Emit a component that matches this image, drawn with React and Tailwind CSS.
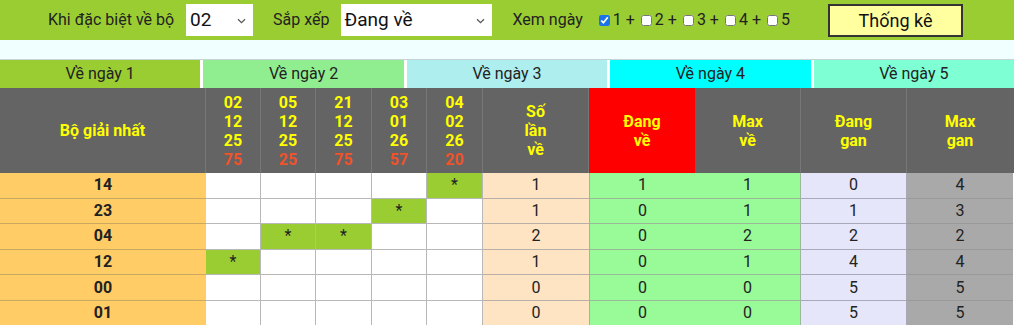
import React from 'react';

const dates = [
  ['02', '12', '25', '75'],
  ['05', '12', '25', '25'],
  ['21', '12', '25', '75'],
  ['03', '01', '26', '57'],
  ['04', '02', '26', '20'],
];

const rows = [
  { bo: '14', hit: [4], so: 1, dv: 1, mv: 1, dg: 0, mg: 4 },
  { bo: '23', hit: [3], so: 1, dv: 0, mv: 1, dg: 1, mg: 3 },
  { bo: '04', hit: [1, 2], so: 2, dv: 0, mv: 2, dg: 2, mg: 2 },
  { bo: '12', hit: [0], so: 1, dv: 0, mv: 1, dg: 4, mg: 4 },
  { bo: '00', hit: [], so: 0, dv: 0, mv: 0, dg: 5, mg: 5 },
  { bo: '01', hit: [], so: 0, dv: 0, mv: 0, dg: 5, mg: 5 },
];

const tabs = [
  { label: 'Về ngày 1', bg: 'bg-[#9acd32]' },
  { label: 'Về ngày 2', bg: 'bg-[#90ee90]' },
  { label: 'Về ngày 3', bg: 'bg-[#afeeee]' },
  { label: 'Về ngày 4', bg: 'bg-[#00ffff]' },
  { label: 'Về ngày 5', bg: 'bg-[#7fffd4]' },
];

const cols = 'grid grid-cols-[206px_55px_55px_56px_55px_56px_106px_106px_106px_106px_106px]';

function Chevron() {
  return (
    <svg width="9" height="6" viewBox="0 0 9 6" className="absolute right-[7px] top-[14px] pointer-events-none">
      <path d="M1 1.2 L4.5 4.6 L8 1.2" fill="none" stroke="#555" strokeWidth="1.2" />
    </svg>
  );
}

function Select({ value, width }) {
  return (
    <div className={`relative h-8 bg-white ${width}`}>
      <div className="pl-[4px] text-[19px] leading-8 text-[#111]">{value}</div>
      <Chevron />
    </div>
  );
}

function Check({ checked, label }) {
  return (
    <label className="flex items-center">
      <input
        type="checkbox"
        defaultChecked={checked}
        className="m-0 w-[11px] h-[11px] accent-[#1a73e8]"
      />
      <span className="ml-[3px] mr-[6px]">{label}</span>
    </label>
  );
}

export default function App() {
  return (
    <div className="w-[1014px] bg-white text-[#222]" style={{ fontFamily: 'Roboto, "Liberation Sans", sans-serif' }}>
      <div className="h-10 bg-[#9acd32] flex items-center pl-[48px] text-[16px]">
        <span>Khi đặc biệt về bộ</span>
        <div className="ml-[12px]"><Select value="02" width="w-[67px]" /></div>
        <span className="ml-[20px]">Sắp xếp</span>
        <div className="ml-[11px]"><Select value="Đang về" width="w-[151px]" /></div>
        <span className="ml-[21px]">Xem ngày</span>
        <div className="ml-[16px] flex items-center">
          <Check checked label="1 +" />
          <Check label="2 +" />
          <Check label="3 +" />
          <Check label="4 +" />
          <Check label="5" />
        </div>
        <button className="ml-auto mr-[51px] w-[135px] h-[33px] bg-[#ffffa0] border-2 border-[#333] text-[18px] text-[#111]">
          Thống kê
        </button>
      </div>

      <div className="h-[19px] bg-[#f0ffff]" />

      <div className="grid grid-cols-5 gap-[3px] border-t border-[#c8d4d4] bg-white h-[29px]">
        {tabs.map((t) => (
          <div key={t.label} className={`${t.bg} flex items-center justify-center text-[16px] text-[#222]`}>
            {t.label}
          </div>
        ))}
      </div>

      <div className={`${cols} h-[85px] bg-[#646464] text-[#ffff00] font-bold text-[16px] leading-[19px]`}>
        <div className="flex items-center justify-center border-r border-[#777]">Bộ giải nhất</div>
        {dates.map((d, i) => (
          <div key={i} className="flex flex-col items-center justify-center border-r border-[#777]">
            <span>{d[0]}</span>
            <span>{d[1]}</span>
            <span>{d[2]}</span>
            <span className="text-[#f0522a]">{d[3]}</span>
          </div>
        ))}
        <div className="flex flex-col items-center justify-center border-r border-[#777]">
          <span>Số</span>
          <span>lần</span>
          <span>về</span>
        </div>
        <div className="flex flex-col items-center justify-center bg-[#ff0000]">
          <span>Đang</span>
          <span>về</span>
        </div>
        <div className="flex flex-col items-center justify-center border-r border-[#777]">
          <span>Max</span>
          <span>về</span>
        </div>
        <div className="flex flex-col items-center justify-center border-r border-[#777]">
          <span>Đang</span>
          <span>gan</span>
        </div>
        <div className="flex flex-col items-center justify-center">
          <span>Max</span>
          <span>gan</span>
        </div>
      </div>

      {rows.map((r) => (
        <div key={r.bo} className={`${cols} h-[25.6px] text-[16px] text-[#222]`}>
          <div className="flex items-center justify-center bg-[#ffcc66] font-bold border-b border-[#c9a860]">{r.bo}</div>
          {[0, 1, 2, 3, 4].map((c) => (
            <div
              key={c}
              className={`flex items-center justify-center border-r border-b border-[#b8b8b8] ${r.hit.includes(c) ? 'bg-[#9acd32]' : 'bg-white'}`}
            >
              {r.hit.includes(c) ? '*' : ''}
            </div>
          ))}
          <div className="flex items-center justify-center bg-[#ffe4c4] border-b border-[#b8b0a8]">{r.so}</div>
          <div className="flex items-center justify-center bg-[#98fb98] border-l border-b border-[#9ab89a]">{r.dv}</div>
          <div className="flex items-center justify-center bg-[#98fb98] border-r border-b border-[#9ab89a]">{r.mv}</div>
          <div className="flex items-center justify-center bg-[#e6e6fa] border-r border-b border-[#a8a8b8]">{r.dg}</div>
          <div className="flex items-center justify-center bg-[#a9a9a9] border-b border-[#999]">{r.mg}</div>
        </div>
      ))}
    </div>
  );
}
